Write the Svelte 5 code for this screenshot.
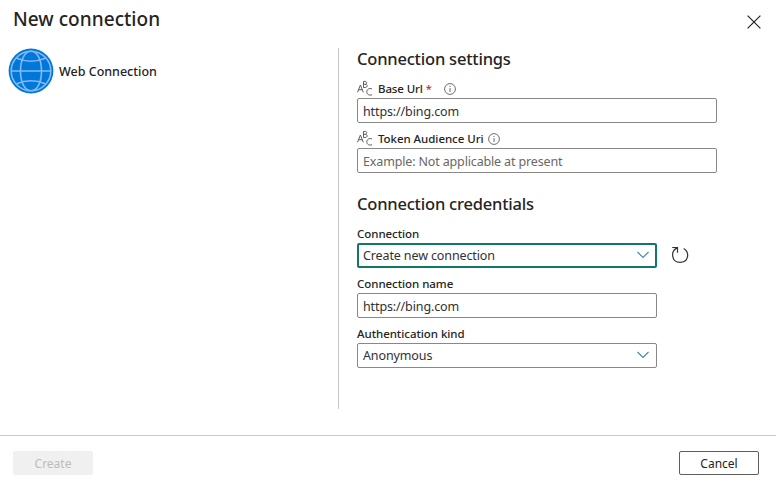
<script>
  let baseUrl = $state('https://bing.com');
  let audience = $state('');
  let name = $state('https://bing.com');
</script>

{#snippet abc()}
  <svg class="abc" width="16" height="16" viewBox="0 0 16 16" aria-hidden="true">
    <path d="M.5 12.3 3.4 5 6.3 12.3M1.6 9.7H5.2M6.5 1.4V7.5H8.2C10.8 7.5 10.8 4.3 8.2 4.3H6.5M6.5 1.4H8.1C10.2 1.4 10.2 4.3 8.1 4.3M15 8.9C12.3 7.8 9.8 9.4 9.8 11.8C9.8 14.4 12.3 15.8 15 14.7" />
  </svg>
{/snippet}

{#snippet info()}
  <svg class="info" width="12" height="12" viewBox="0 0 12 12" aria-hidden="true">
    <circle cx="6" cy="6" r="5.4" />
    <path d="M6 5V9M6 3V4" />
  </svg>
{/snippet}

{#snippet chevron()}
  <svg class="chevron" width="12" height="8" viewBox="0 0 12 8" aria-hidden="true">
    <path d="M.5 1 6 6.5 11.5 1" />
  </svg>
{/snippet}

<div class="dialog">
  <header>
    <h1>New connection</h1>
    <button class="close" aria-label="Close">
      <svg width="14" height="14" viewBox="0 0 14 14"><path d="M.6.6 13.4 13.4M13.4.6.6 13.4" /></svg>
    </button>
  </header>

  <main>
    <aside>
      <svg class="globe" width="46" height="46" viewBox="0 0 46 46" aria-hidden="true">
        <circle cx="23" cy="23" r="22.4" fill="#0078d7" />
        <g fill="none" stroke="#83b9f9" stroke-width="1.6">
          <circle cx="23" cy="23" r="19.8" />
          <path d="M23 3.2C9 3.2 9 42.8 23 42.8C37 42.8 37 3.2 23 3.2" />
          <path d="M3 23H43M8 10Q23 16.4 38 10M8 36Q23 29.6 38 36" />
        </g>
      </svg>
      <span class="web">Web Connection</span>
    </aside>

    <section>
      <h2 class="settings">Connection settings</h2>
      <div class="label first">{@render abc()}<span class="base">Base Url</span><span class="star">*</span>{@render info()}</div>
      <input class="wide" bind:value={baseUrl} aria-label="Base Url" />
      <div class="label">{@render abc()}<span class="token">Token Audience Uri</span>{@render info()}</div>
      <input class="wide hint" bind:value={audience} placeholder="Example: Not applicable at present" aria-label="Token Audience Uri" />

      <h2 class="credentials">Connection credentials</h2>
      <div class="label first">Connection</div>
      <div class="row">
        <div class="select active" role="button" tabindex="0"><span class="create-new">Create new connection</span>{@render chevron()}</div>
        <svg class="refresh" width="18" height="18" viewBox="0 0 18 18" aria-hidden="true">
          <path d="M1.2 1.5H6.5V6.8M6.1 1.9C-.7 5.2.3 16.4 9 16.4C17.7 16.4 19 6.4 12.7 2.4" />
        </svg>
      </div>
      <div class="label">Connection name</div>
      <input bind:value={name} aria-label="Connection name" />
      <div class="label">Authentication kind</div>
      <div class="select" role="button" tabindex="0"><span class="anonymous">Anonymous</span>{@render chevron()}</div>
    </section>
  </main>

  <footer>
    <button class="create" disabled>Create</button>
    <button class="cancel">Cancel</button>
  </footer>
</div>

<style>
  :global(body) { margin: 0; background: #fff; }
  .dialog { width: 776px; height: 482px; box-sizing: border-box; display: flex; flex-direction: column; overflow: hidden; font: 13px/18px 'Noto Sans', 'Open Sans', sans-serif; color: #252423; }
  header { display: flex; justify-content: space-between; height: 48px; padding: 0 15px 0 13px; box-sizing: border-box; }
  h1, h2 { margin: 0; font-weight: 500; white-space: nowrap; }
  h1 { font-size: 19px; letter-spacing: .05px; line-height: 24px; padding-top: 7px; }
  button { font: inherit; }
  .close { border: 0; padding: 0; background: none; width: 14px; height: 14px; margin-top: 15px; }
  svg { display: block; flex: none; fill: none; }
  .close svg { stroke: #252423; stroke-width: 1.2; }
  main { display: flex; height: 361px; }
  aside { display: flex; width: 338px; padding-left: 8px; box-sizing: border-box; align-items: flex-start; }
  .web { margin: 15px 0 0 5px; font-weight: 500; font-size: 12.5px; }
  section { border-left: 1px solid #c8c8c8; padding-left: 18px; flex: 1; }
  h2 { font-size: 16.5px; letter-spacing: -.2px; height: 24px; line-height: 22px; }
  .credentials { margin-top: 20px; }
  .label { display: flex; align-items: center; height: 25px; box-sizing: border-box; padding-top: 6px; font-size: 11.5px; letter-spacing: -.05px; font-weight: 500; white-space: nowrap; }
  .label.first { height: 26px; padding-top: 8px; }
  .abc { stroke: #605e5c; stroke-width: 1; margin: 0 5px 2px 0; }
  .info { stroke: #605e5c; stroke-width: .9; margin-left: 4px; }
  .base { letter-spacing: -.12px; }
  .star { color: #a4262c; font-weight: 400; margin: 0 8px 0 3px; font-size: 11px; }
  input, .select { display: flex; width: 300px; height: 25px; box-sizing: border-box; border: 1px solid #8a8886; border-radius: 2px; padding: 0 5px; font: inherit; font-size: 12.5px; letter-spacing: -.12px; line-height: 23px; color: #323130; background: #fff; outline: 0; }
  input { padding-top: 1px; }
  .wide { width: 360px; }
  input::placeholder { color: #696765; opacity: 1; letter-spacing: -.15px; }
  .select { align-items: center; justify-content: space-between; padding-right: 7px; }
  .select.active { border: 2px solid #117865; padding: 0 6px 0 4px; }
  .chevron { stroke: #3f86bd; stroke-width: 1.1; margin-bottom: 1px; }
  .row { display: flex; align-items: center; gap: 14px; }
  .refresh { stroke: #333; stroke-width: 1.2; margin-bottom: 1px; }
  footer { display: flex; justify-content: space-between; align-items: flex-start; margin-top: 26px; border-top: 1px solid #c8c8c8; padding: 15px 17px 0 13px; }
  footer button { width: 80px; height: 24px; padding: 1px 0 0; border-radius: 2px; font-size: 12px; line-height: 21px; }
  .create { background: #f0f0f0; border: 1px solid #f0f0f0; color: #bebbb8; }
  .cancel { background: #fff; border: 1px solid #605e5c; color: #252423; }
</style>
